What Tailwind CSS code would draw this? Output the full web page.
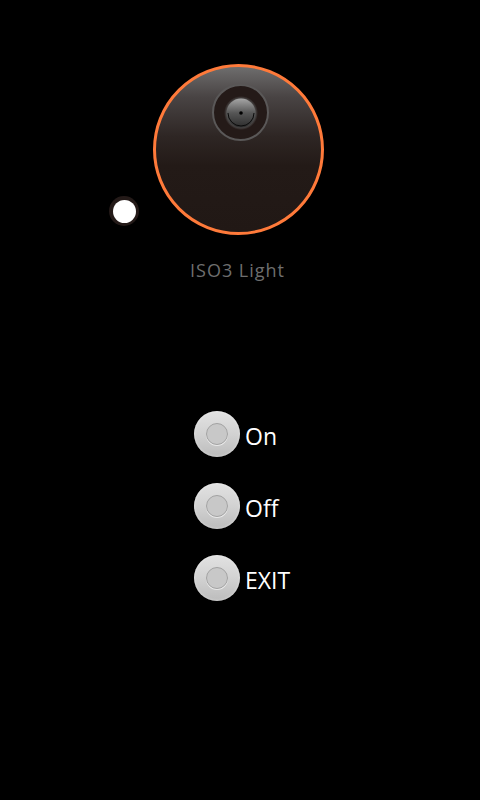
<!DOCTYPE html>
<html lang="en">
<head>
  <meta charset="UTF-8">
  <meta name="viewport" content="width=device-width,initial-scale=1">
  <title>ISO3 Light</title>
  <script src="https://cdn.jsdelivr.net/npm/@tailwindcss/browser@4"></script>
</head>
<body class="bg-black font-['Open_Sans',sans-serif]">
  <div class="relative w-[480px] h-[800px] overflow-hidden bg-black">
    <!-- dial -->
    <div class="pt-[64px] pl-[153px]">
      <div class="relative w-[171px] h-[171px] rounded-full border-[3px] border-[#ff7a3a] bg-[linear-gradient(180deg,#6e6d6d_0%,#494444_18%,#2e2624_42%,#231a17_60%,#211815_100%)]">
        <div class="absolute left-[56px] top-[17px] w-[57px] h-[57px] rounded-full border-2 border-[#5a5858] bg-[#241a18] flex items-center justify-center">
          <svg width="36" height="36" viewBox="0 0 36 36">
            <defs>
              <linearGradient id="lens" x1="0" y1="0" x2="0" y2="1">
                <stop offset="0" stop-color="#a6a6a6"/>
                <stop offset="0.5" stop-color="#565656"/>
                <stop offset="1" stop-color="#2c2c2c"/>
              </linearGradient>
              <radialGradient id="halo" cx="0.5" cy="0.5" r="0.5">
                <stop offset="0.8" stop-color="#585858"/>
                <stop offset="1" stop-color="#241a18"/>
              </radialGradient>
            </defs>
            <circle cx="18" cy="18" r="17" fill="url(#halo)"/>
            <circle cx="18" cy="18" r="14.5" fill="url(#lens)"/>
            <path d="M5 18a13 13 0 0 0 26 0" fill="none" stroke="#0a0a0a" stroke-width="1"/>
            <circle cx="18" cy="18" r="1.8" fill="#000"/>
          </svg>
        </div>
      </div>
    </div>

    <!-- drag handle -->
    <div class="absolute left-[109px] top-[196px] w-[30px] h-[30px] rounded-full bg-[#241a18] flex items-center justify-center">
      <div class="w-[23px] h-[23px] rounded-full bg-white"></div>
    </div>

    <p class="mt-[23px] pl-[190px] text-[18px] leading-[24px] tracking-[1px] text-[#6e6e6e]">ISO3 Light</p>

    <!-- options -->
    <div class="mt-[129px] pl-[194px] flex flex-col gap-[26px]">
      <div class="flex items-center gap-[5px] h-[46px]">
        <div class="w-[46px] h-[46px] rounded-full bg-[linear-gradient(180deg,#e2e2e2_0%,#d2d2d2_50%,#bcbcbc_100%)] shadow-[inset_0_0_3px_rgba(255,255,255,0.5)] pb-[1px] flex items-center justify-center">
          <div class="w-[22px] h-[22px] rounded-full border-[1.5px] border-[#a2a2a2] bg-[#c8c8c8] shadow-[0_1px_0_rgba(255,255,255,0.6)]"></div>
        </div>
        <span class="text-[23px] leading-[30px] pt-[3px] text-white">On</span>
      </div>
      <div class="flex items-center gap-[5px] h-[46px]">
        <div class="w-[46px] h-[46px] rounded-full bg-[linear-gradient(180deg,#e2e2e2_0%,#d2d2d2_50%,#bcbcbc_100%)] shadow-[inset_0_0_3px_rgba(255,255,255,0.5)] pb-[1px] flex items-center justify-center">
          <div class="w-[22px] h-[22px] rounded-full border-[1.5px] border-[#a2a2a2] bg-[#c8c8c8] shadow-[0_1px_0_rgba(255,255,255,0.6)]"></div>
        </div>
        <span class="text-[23px] leading-[30px] pt-[3px] text-white">Off</span>
      </div>
      <div class="flex items-center gap-[5px] h-[46px]">
        <div class="w-[46px] h-[46px] rounded-full bg-[linear-gradient(180deg,#e2e2e2_0%,#d2d2d2_50%,#bcbcbc_100%)] shadow-[inset_0_0_3px_rgba(255,255,255,0.5)] pb-[1px] flex items-center justify-center">
          <div class="w-[22px] h-[22px] rounded-full border-[1.5px] border-[#a2a2a2] bg-[#c8c8c8] shadow-[0_1px_0_rgba(255,255,255,0.6)]"></div>
        </div>
        <span class="text-[23px] leading-[30px] pt-[3px] text-white">EXIT</span>
      </div>
    </div>
  </div>
</body>
</html>
